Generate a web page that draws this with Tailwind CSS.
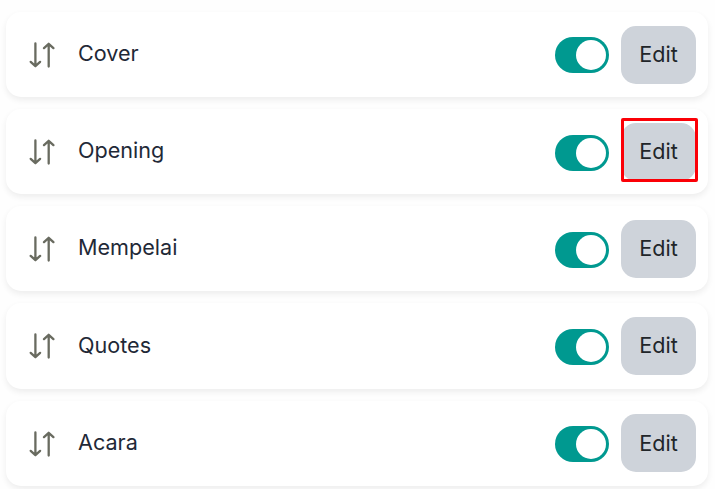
<!DOCTYPE html>
<html lang="id">
<head>
<meta charset="UTF-8" />
<meta name="viewport" content="width=device-width, initial-scale=1.0" />
<title>Sections</title>
<script src="https://cdn.jsdelivr.net/npm/@tailwindcss/browser@4"></script>
</head>
<body class="h-screen bg-[#fefefe] overflow-hidden font-['Inter',sans-serif]">

<!-- Section list -->
<ul id="section-list" class="flex flex-col gap-3 pt-3 pl-1.5 pr-[7px]"></ul>

<script>
const sections = [
{ name: 'Cover' },
{ name: 'Opening', highlighted: true },
{ name: 'Mempelai' },
{ name: 'Quotes' },
{ name: 'Acara' }
];

function renderSections() {
const list = document.getElementById('section-list');
sections.forEach(section => {
const row = document.createElement('li');
row.className = 'flex items-center shrink-0 h-[85.15px] pl-[23px] pr-3 rounded-[15px] bg-white shadow-[0_3px_6px_rgba(0,0,0,0.07)]';
row.innerHTML = `
<svg class="w-[26px] h-[26px] mt-[0.8px] shrink-0 text-[#696b60]" viewBox="0 0 26 26" fill="none" stroke="currentColor" stroke-width="2.3" stroke-linecap="round" stroke-linejoin="round">
<path d="M6.4 1.5V24.2M1.7 19.9L6.4 24.2L11.1 19.9" />
<path d="M19.7 24.5V1.8M15 6.1L19.7 1.8L24.4 6.1" />
</svg>
<span class="ml-[23px] pb-[2.9px] grow text-[21.6px] leading-8 text-[#1f2937]">${section.name}</span>
<button class="flex justify-end w-[54px] h-9 p-[3px] mt-[1.8px] mr-3 rounded-full bg-[#009990]" role="switch" aria-checked="true" aria-label="${section.name}">
<span class="size-[30px] rounded-full bg-white"></span>
</button>
<div class="relative">
<button class="block w-[75px] h-[58px] pb-[0.8px] rounded-[15px] bg-[#ced3da] text-[21.6px] text-[#212529]">Edit</button>
${section.highlighted ? '<span class="absolute -top-[4.4px] left-0 w-[77px] h-16 border-3 border-[#fb0007] rounded-[2px]"></span>' : ''}
</div>
`;
list.appendChild(row);
});
}

renderSections();
</script>

</body>
</html>
